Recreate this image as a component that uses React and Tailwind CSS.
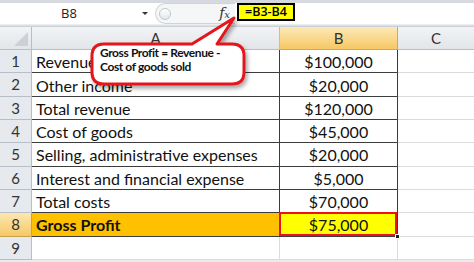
import React from "react";

const rows = [
  ["Revenue", "$100,000"],
  ["Other income", "$20,000"],
  ["Total revenue", "$120,000"],
  ["Cost of goods", "$45,000"],
  ["Selling, administrative expenses", "$20,000"],
  ["Interest and financial expense", "$5,000"],
  ["Total costs", "$70,000"],
  ["Gross Profit", "$75,000"],
];

const rowHead =
  "flex items-center justify-center border-r border-b text-[15px] text-[#333]";

export default function App() {
  return (
    <div className="relative w-[474px] h-[262px] overflow-hidden bg-[#e9ebee] font-['Lato',sans-serif]">
      {/* top strip */}
      <div className="h-[3px] bg-[#d6dae0]" />

      {/* formula bar */}
      <div className="flex h-[21px] bg-white">
        <div className="relative w-[155px] flex items-center">
          <span className="w-[138px] text-center text-[13px] text-[#222] font-['Open_Sans',sans-serif]">
            B8
          </span>
          <span className="ml-[4px] w-0 h-0 border-l-[3px] border-r-[3px] border-t-[3px] border-l-transparent border-r-transparent border-t-[#333]" />
        </div>
        <div className="w-[80px] flex items-center bg-[#f5f6f7] border-y border-l border-[#d0d3d8] rounded-l-full">
          <div className="ml-[3px] w-[12px] h-[12px] rounded-full border border-[#c3c7cc] bg-gradient-to-b from-white to-[#e4e6e9]" />
          <span className="ml-auto mr-[5px] font-['DejaVu_Serif',serif] italic text-[14px] leading-[16px] text-[#333] whitespace-nowrap">
            f<span className="text-[10px]">x</span>
          </span>
        </div>
        <div className="flex-1 flex items-start pl-[2px]">
          <div className="h-[18px] w-[58px] bg-[#ffff00] border-2 border-black flex items-center justify-center text-[12.5px] font-semibold text-black font-['Open_Sans',sans-serif] leading-none">
            =B3-B4
          </div>
        </div>
      </div>

      {/* separator */}
      <div className="h-[3px] bg-gradient-to-b from-[#f4f5f7] to-[#c5cad1]" />

      {/* grid */}
      <div className="grid grid-cols-[32px_248px_118px_76px] grid-rows-[23px_repeat(9,23.33px)] bg-white">
        {/* column headers */}
        <div className="relative border-r border-b border-[#b9bec6] bg-gradient-to-b from-[#f2f3f5] to-[#e2e5e9]">
          <svg className="absolute right-[3px] bottom-[3px]" width="14" height="14">
            <polygon points="14,0 14,14 0,14" fill="#cdd1d6" />
          </svg>
        </div>
        <div className="flex items-center justify-center border-r border-b border-[#b9bec6] bg-gradient-to-b from-[#f2f3f5] to-[#e2e5e9] text-[15px] text-[#333]">
          A
        </div>
        <div className="flex items-center justify-center border-r border-b border-[#d9a93c] bg-gradient-to-b from-[#fde9b6] to-[#f6c862] text-[15px] text-[#333]">
          B
        </div>
        <div className="flex items-center justify-center border-b border-[#b9bec6] bg-gradient-to-b from-[#f2f3f5] to-[#e2e5e9] text-[15px] text-[#333]">
          C
        </div>

        {rows.map(([label, value], i) => {
          const last = i === rows.length - 1;
          return (
            <React.Fragment key={label}>
              <div
                className={
                  rowHead +
                  (last
                    ? " border-[#c9a24a] bg-gradient-to-b from-[#fde7b0] to-[#f5c965]"
                    : " border-[#b9bec6] bg-[#e6e9ed]")
                }
              >
                {i + 1}
              </div>
              <div
                className={
                  "flex items-center pl-[4px] pt-[2px] border-r border-b border-[#3c3c3c] text-[16px] text-[#111] whitespace-nowrap" +
                  (last ? " bg-[#ffc000] font-bold" : "")
                }
              >
                {label}
              </div>
              <div
                className={
                  "relative flex items-center justify-center pt-[2px] border-r border-b border-[#3c3c3c] text-[16px] text-[#111]" +
                  (last ? " bg-[#ffff00]" : "")
                }
              >
                {value}
                {last && (
                  <>
                    <div className="absolute -left-px -top-px right-0 bottom-0 border-2 border-[#e8141a]" />
                    <div className="absolute -right-[3px] -bottom-[3px] w-[5px] h-[5px] bg-[#222] border border-white" />
                  </>
                )}
              </div>
              <div className="border-b border-[#dadcdf]" />
            </React.Fragment>
          );
        })}

        {/* row 9 */}
        <div className={rowHead + " border-[#b9bec6] bg-[#e6e9ed]"}>9</div>
        <div className="border-r border-b border-[#dadcdf]" />
        <div className="border-r border-b border-[#dadcdf]" />
        <div className="border-b border-[#dadcdf]" />
      </div>

      {/* callout */}
      <svg
        className="absolute left-0 top-0 pointer-events-none"
        width="474"
        height="262"
      >
        <defs>
          <filter id="sh" x="-10%" y="-10%" width="130%" height="140%">
            <feDropShadow dx="2" dy="3" stdDeviation="2" floodColor="#000" floodOpacity="0.35" />
          </filter>
        </defs>
        <path
          d="M104 44 L192 44 L234 18 L217 44 L232 44 Q244 44 244 56 L244 72 Q244 84 232 84 L104 84 Q92 84 92 72 L92 56 Q92 44 104 44 Z"
          fill="#fff"
          stroke="#e3151c"
          strokeWidth="3"
          strokeLinejoin="round"
          filter="url(#sh)"
        />
      </svg>
      <div className="absolute left-[100px] top-[46px] text-[12px] leading-[13.5px] tracking-[-0.4px] font-bold text-[#111]">
        <div>Gross Profit = Revenue -</div>
        <div>Cost of goods sold</div>
      </div>
    </div>
  );
}
